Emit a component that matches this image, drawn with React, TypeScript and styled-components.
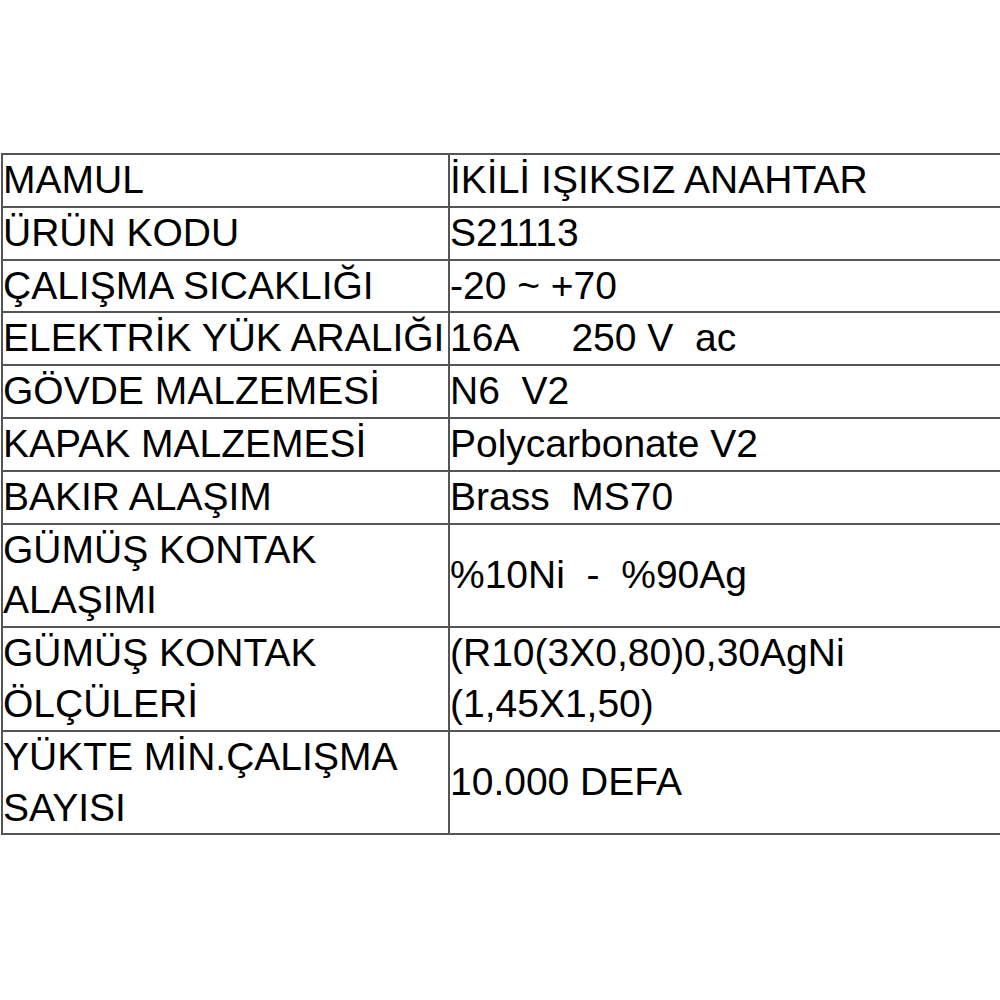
import React from 'react'
import styled, { createGlobalStyle } from 'styled-components'

const GlobalStyle = createGlobalStyle`
    html, body {
        margin: 0;
        padding: 0;
        background: #ffffff;
    }
    body {
        font-family: 'Liberation Sans', Arial, sans-serif;
        color: #000000;
        overflow: hidden;
    }
`

const Page = styled.div`
    width: 1000px;
    height: 1000px;
    padding-top: 153px;
    box-sizing: border-box;
`

const Table = styled.div`
    margin-left: 1px;
    border-top: 2px solid #555555;
    border-left: 2px solid #555555;
    display: flex;
    flex-direction: column;
`

const Row = styled.div`
    display: grid;
    grid-template-columns: 447px 1fr;
    border-bottom: 2px solid #555555;
`

const Cell = styled.div<{ $label?: boolean }>`
    font-size: 39px;
    line-height: 50.8px;
    white-space: pre;
    display: flex;
    flex-direction: column;
    justify-content: center;
    border-right: ${(p) => (p.$label ? '2px solid #555555' : 'none')};
`

const rows: { label: string[]; value: string[] }[] = [
    { label: ['MAMUL'], value: ['İKİLİ IŞIKSIZ ANAHTAR'] },
    { label: ['ÜRÜN KODU'], value: ['S21113'] },
    { label: ['ÇALIŞMA SICAKLIĞI'], value: ['-20 ~ +70'] },
    { label: ['ELEKTRİK YÜK ARALIĞI'], value: ['16A     250 V  ac'] },
    { label: ['GÖVDE MALZEMESİ'], value: ['N6  V2'] },
    { label: ['KAPAK MALZEMESİ'], value: ['Polycarbonate V2'] },
    { label: ['BAKIR ALAŞIM'], value: ['Brass  MS70'] },
    { label: ['GÜMÜŞ KONTAK', 'ALAŞIMI'], value: ['%10Ni  -  %90Ag'] },
    { label: ['GÜMÜŞ KONTAK', 'ÖLÇÜLERİ'], value: ['(R10(3X0,80)0,30AgNi', '(1,45X1,50)'] },
    { label: ['YÜKTE MİN.ÇALIŞMA', 'SAYISI'], value: ['10.000 DEFA'] },
]

const App = () => {
    return (
        <Page>
            <GlobalStyle />
            <Table>
                {rows.map((row) => (
                    <Row key={row.label.join(' ')}>
                        <Cell $label>
                            {row.label.map((line) => (
                                <span key={line}>{line}</span>
                            ))}
                        </Cell>
                        <Cell>
                            {row.value.map((line) => (
                                <span key={line}>{line}</span>
                            ))}
                        </Cell>
                    </Row>
                ))}
            </Table>
        </Page>
    )
}

export default App
